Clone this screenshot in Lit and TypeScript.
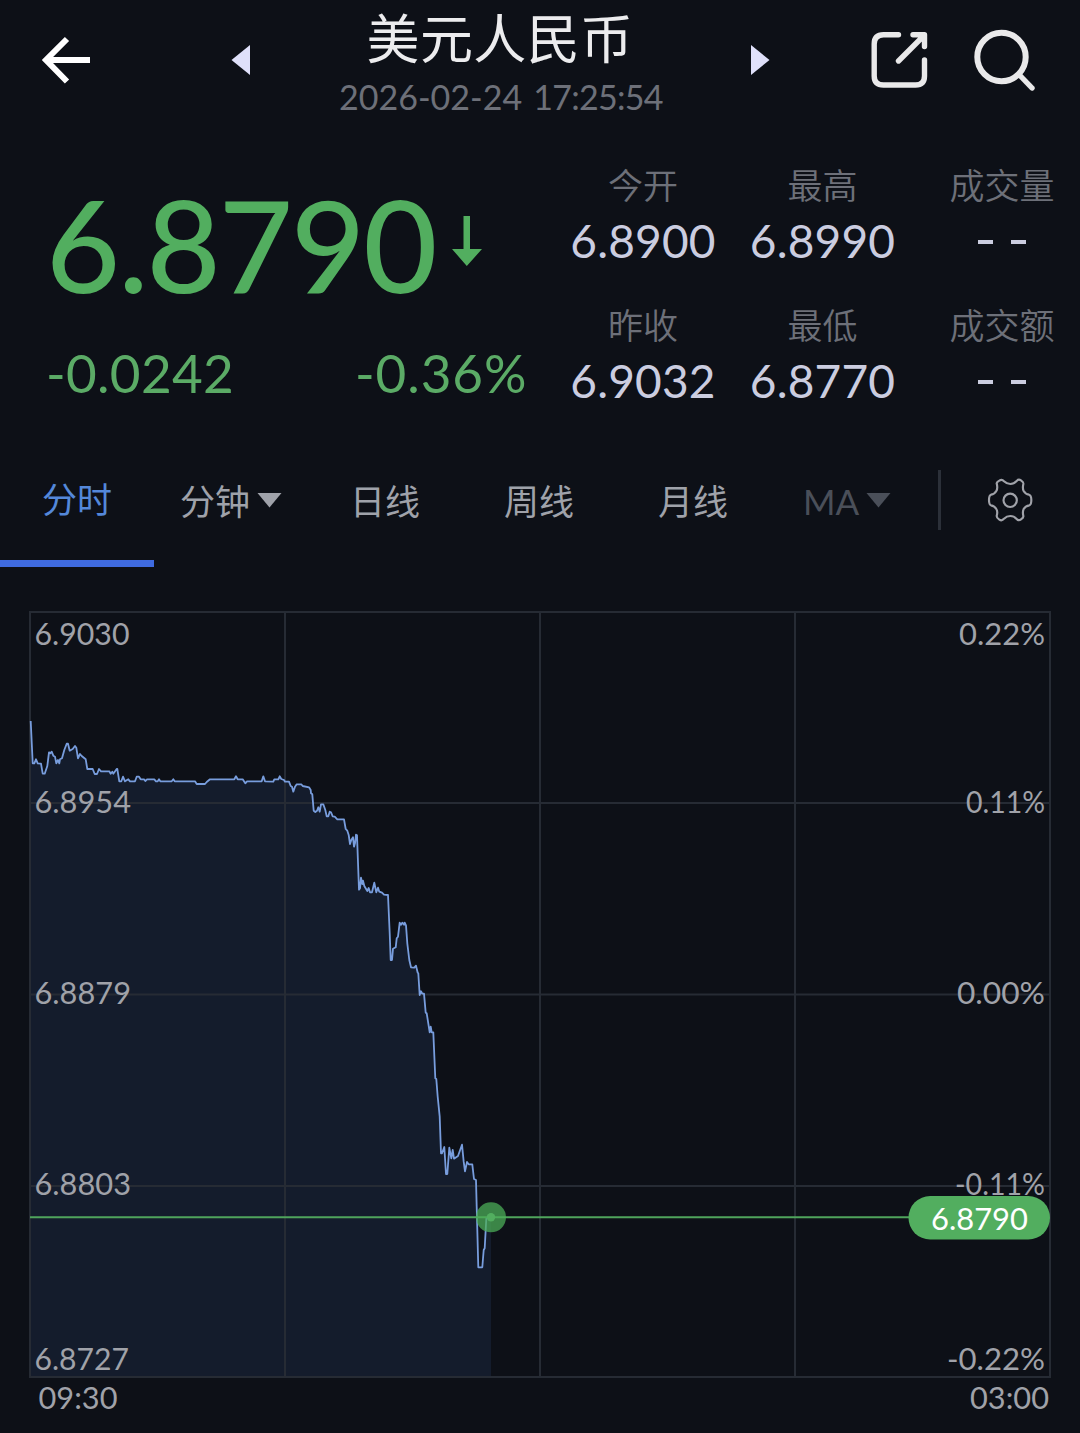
import { LitElement, html, svg, css } from "lit";
import { customElement } from "lit/decorators.js";

const fontStack = css`Lato, "Noto Sans CJK SC", sans-serif`;

@customElement("quote-header")
class QuoteHeader extends LitElement {
  static styles = css`
    :host { display: block; font-family: ${fontStack}; }
    .bar { display: flex; height: 140px; align-items: flex-start; }
    .bar svg { display: block; flex: none; fill: none; }
    .back { margin: 36px 0 0 41px; }
    .prev { margin: 44px 0 0 140px; }
    .title { flex: none; width: 500px; display: flex; flex-direction: column; align-items: center; white-space: nowrap; }
    .next { margin: 44px 0 0 1px; }
    .share { margin: 30px 0 0 100px; }
    .search { margin: 28px 0 0 42px; }
    .name { font-size: 53px; line-height: 60px; margin-top: 9px; color: #ececee; letter-spacing: 0.4px; }
    .time { display: flex; gap: 11px; font-size: 34px; line-height: 40px; margin-top: 8px; padding-left: 2px; color: #6d7079; }
    .clock { letter-spacing: -0.7px; }
  `;
  render() {
    return html`<div class="bar">
      <svg class="back" width="50" height="50" viewBox="0 0 50 50" stroke="#fff" stroke-width="6">
        <path d="M49 24H5M26 3 5 24l21 21.500" />
      </svg>
      <svg class="prev" width="19" height="32" viewBox="0 0 19 32"><path fill="#dfe0fa" d="M.5 16 19 1v30z" /></svg>
      <div class="title">
        <div class="name">美元人民币</div>
        <div class="time"><span>2026-02-24</span><span class="clock">17:25:54</span></div>
      </div>
      <svg class="next" width="19" height="32" viewBox="0 0 19 32"><path fill="#dfe0fa" d="M0 1v30l18.500-15z" /></svg>
      <svg class="share" width="60" height="60" viewBox="0 0 60 60" stroke="#e9e9ea" stroke-width="5.4" stroke-linecap="round" stroke-linejoin="round">
        <path d="M28.500 4.800H13.500Q4.200 4.800 4.200 14V46Q4.200 55 13.500 55H45.500Q54.500 55 54.500 46V30M28.500 31 54 5.500M43 4.800H54.500V16.500" />
      </svg>
      <svg class="search" width="64" height="64" viewBox="0 0 64 64" stroke="#e9e9ea" stroke-width="6" stroke-linecap="round">
        <circle cx="29.500" cy="29" r="24.200" /><path d="M47.500 47 60 60" stroke-width="5.400" />
      </svg>
    </div>`;
  }
}

@customElement("quote-summary")
class QuoteSummary extends LitElement {
  static styles = css`
    :host { display: block; font-family: ${fontStack}; }
    .summary { display: flex; height: 310px; }
    .main { flex: none; width: 553px; color: #52ae5f; }
    .price { display: flex; height: 144px; padding: 30px 0 0 46px; }
    .last { font-size: 128px; line-height: 148px; font-weight: 500; letter-spacing: -2px; width: 405px; white-space: nowrap; }
    .price svg { display: block; margin-top: 46px; }
    .change { display: flex; padding: 26px 0 0 46px; font-size: 53px; line-height: 66px; color: #5bab66; white-space: nowrap; letter-spacing: 0.3px; }
    .diff { width: 309px; }
    .rate { letter-spacing: 0.9px; }
    .stats { display: grid; grid-template-columns: 180px 179px 180px; grid-auto-rows: 140px; padding-top: 23px; }
    .stat { display: flex; flex-direction: column; align-items: center; white-space: nowrap; }
    .label { font-size: 35px; line-height: 44px; color: #6d7079; font-weight: 350; }
    .value { font-size: 46px; line-height: 56px; margin-top: 6px; color: #cbcde0; letter-spacing: 0.2px; }
    .empty { display: flex; gap: 18px; padding-top: 28px; margin-top: 5px; }
    .dash { width: 15px; height: 4px; background: #cbcde0; }
  `;
  private stats = [
    ["今开", "6.8900"], ["最高", "6.8990"], ["成交量", ""],
    ["昨收", "6.9032"], ["最低", "6.8770"], ["成交额", ""],
  ];
  render() {
    return html`<div class="summary">
      <div class="main">
        <div class="price">
          <div class="last">6.8790</div>
          <svg width="31" height="51" viewBox="0 0 31 51"><path fill="#52ae5f" d="M12.500 0h6.500v33H31L15.800 50 1 33h11.500z" /></svg>
        </div>
        <div class="change"><div class="diff">-0.0242</div><div class="rate">-0.36%</div></div>
      </div>
      <div class="stats">
        ${this.stats.map(([label, value]) => html`<div class="stat">
          <div class="label">${label}</div>
          ${value
            ? html`<div class="value">${value}</div>`
            : html`<div class="empty"><span class="dash"></span><span class="dash"></span></div>`}
        </div>`)}
      </div>
    </div>`;
  }
}

@customElement("period-tabs")
class PeriodTabs extends LitElement {
  static styles = css`
    :host { display: block; font-family: ${fontStack}; }
    .tabs { display: flex; height: 117px; font-size: 35px; line-height: 44px; color: #9fa2aa; white-space: nowrap; }
    .tab { display: flex; flex: none; width: 154px; justify-content: center; padding-top: 29px; box-sizing: border-box; gap: 7px; }
    .active { color: #5488da; padding-top: 27px; border-bottom: 7px solid #3f6be0; }
    .tab svg { display: block; margin-top: 13px; }
    .muted { color: #4a4f59; }
    .divider { width: 3px; height: 60px; margin: 20px 0 0 14px; background: #2b3039; }
    .gear { display: block; margin: 20px 0 0 39px; }
  `;
  render() {
    const caret = html`<svg width="25" height="16" viewBox="0 0 25 16"><path fill="currentColor" d="M.5 1h24L12.500 15.500z" /></svg>`;
    return html`<div class="tabs">
      <div class="tab active">分时</div>
      <div class="tab">分钟${caret}</div>
      <div class="tab">日线</div>
      <div class="tab">周线</div>
      <div class="tab">月线</div>
      <div class="tab muted">MA${caret}</div>
      <div class="divider"></div>
      <svg class="gear" width="60" height="60" viewBox="0 0 180 180" fill="none" stroke="#a0a2a9" stroke-width="6.500" stroke-linejoin="round">
        <circle cx="90.500" cy="91" r="20" />
        <path d="M50 40Q51 36 58 32Q66 26 72 34Q80 42 91 42Q102 42 109 34Q115 26 123 31Q131 36 130 42Q127 55 131 63Q136 72 147 74Q154 76 154 90Q154 104 148 106Q136 108 131 117Q127 125 130 138Q131 143 123 148Q115 154 109 146Q102 138 91 138Q80 138 72 146Q66 154 58 149Q50 144 50 138Q54 125 49 117Q44 108 33 106Q27 104 27 90Q27 76 33 74Q44 72 49 63Q54 55 50 40Z" />
      </svg>
    </div>`;
  }
}

/** Price trace of the session, in thirds of a pixel from each part's origin. */
const trace = [
  { x: 20, y: 600, pts: "32,363 38,490 43,490 48,478 53,490 63,491 68,521 74,521 82,498 87,457 91,460 95,455 100,467 105,470 109,490 114,480 118,490 120,478 126,475 133,450 140,431 144,431 149,452 158,447 165,438 169,443 174,475 180,462 185,468 197,478 202,507 218,507 224,522 231,522 237,507 243,514 268,514 272,521 277,515 280,521 290,507 292,507 298,544 304,544 309,530 315,544 325,538 330,544 345,544 350,530 357,530 362,538 372,538 376,543 381,538 403,538 408,544 413,544 417,538 421,544 455,544 460,538 464,544 525,544 530,552 555,552 560,546 570,538 643,538 648,529 653,538 668,538 676,550 681,544 725,544 730,529 735,544" },
  { x: 270, y: 760, pts: "10,65 13,58 25,58 29,49 34,57 42,60 45,65 57,65 62,78 66,80 70,95 75,80 80,73 94,73 98,78 117,82 122,90 123,100 127,103 131,152 136,156 141,152 145,142 149,155 153,133 160,133 166,150 170,169 175,169 179,155 183,157 188,169 194,170 202,178 222,178 227,207 232,212 236,225 240,252 244,240 249,232 252,260 255,250 258,224 261,226 267,389 270,385 273,353 277,372 279,362 283,378 292,393 296,384 300,397 306,397 313,368 319,397 324,383 328,395 336,398 342,404 354,405 359,520 362,600 366,600 369,566 377,562 380,535 384,530 389,488 393,494 397,488 402,494 404,488 408,496 412,550 418,600 423,622 433,623 438,617 443,638 445,640" },
  { x: 380, y: 980, pts: "119,45 123,34 127,41 132,41 137,98 140,100 149,157 152,140 155,157 160,157 166,295 169,297 173,350 179,410 183,520 186,520 193,501 198,582 202,582 208,503 214,535 218,510 222,536 234,528 246,494 251,545 255,574 261,546 266,553 277,553 282,597 288,600 290,680 295,862 307,862 311,810 314,805 319,716 333,712" },
];
const TOP = 567;
const line = trace
  .flatMap((part) => part.pts.split(" ").map((p) => {
    const [x, y] = p.split(",").map(Number);
    return `${(part.x + x / 3).toFixed(1)},${(part.y + y / 3 - TOP).toFixed(1)}`;
  }))
  .join(" ");

@customElement("intraday-chart")
class IntradayChart extends LitElement {
  static styles = css`
    :host { display: block; }
    .chart { display: block; font-family: ${fontStack}; font-size: 31.5px; }
    .grid { stroke: #262b34; stroke-width: 2; fill: none; }
    .area { fill: #141c2c; }
    .line { fill: none; stroke: #789ddd; stroke-width: 1.8; stroke-linejoin: round; }
    .axis { fill: #a0a2a9; }
    .now { stroke: #4fa45c; stroke-width: 2; }
    .halo { fill: #4cae58; opacity: 0.74; }
    .dot { fill: #52ae5f; }
    .pill { fill: #52ae5f; }
    .tag { fill: #fff; }
  `;
  private left: [string, number, number, number][] = [
    ["6.9030", 34.5, 78, 95], ["6.8954", 34.5, 245.5, 96.5], ["6.8879", 34.5, 437, 96.5],
    ["6.8803", 34.5, 628, 96.5], ["6.8727", 34.5, 803, 94.5], ["09:30", 38.5, 841.5, 79],
  ];
  private right: [string, number, number, number][] = [
    ["0.22%", 1045, 78, 86], ["0.11%", 1045, 245.5, 79], ["0.00%", 1045, 437, 88],
    ["-0.11%", 1045, 628, 90], ["-0.22%", 1045, 803, 98], ["03:00", 1049, 841.5, 79],
  ];
  render() {
    return html`<svg class="chart" width="1080" height="866" viewBox="0 0 1080 866">
      <polygon class="area" points="30,810 ${line} 491,810" />
      <path class="grid" d="M30 45H1050V810H30ZM285 45V810M540 45V810M795 45V810M30 236H1050M30 427.500H1050M30 619H1050" />
      <polyline class="line" points=${line} />
      ${this.left.map(([t, x, y, w]) => svg`<text class="axis" x=${x} y=${y} textLength=${w} lengthAdjust="spacingAndGlyphs">${t}</text>`)}
      ${this.right.map(([t, x, y, w]) => svg`<text class="axis" x=${x - w} y=${y} textLength=${w} lengthAdjust="spacingAndGlyphs">${t}</text>`)}
      <path class="now" d="M30 650.300H910" />
      <circle class="halo" cx="491" cy="650.300" r="15" />
      <circle class="dot" cx="491" cy="650.300" r="4.200" />
      <rect class="pill" x="908.500" y="629" width="141.500" height="43.500" rx="21.700" />
      <text class="tag" x="931" y="663" textLength="97" lengthAdjust="spacingAndGlyphs">6.8790</text>
    </svg>`;
  }
}

@customElement("app-root")
class AppRoot extends LitElement {
  static styles = css`
    :host { display: block; width: 1080px; height: 1433px; overflow: hidden; background: #0d1017; }
  `;
  render() {
    return html`<quote-header></quote-header><quote-summary></quote-summary><period-tabs></period-tabs><intraday-chart></intraday-chart>`;
  }
}
